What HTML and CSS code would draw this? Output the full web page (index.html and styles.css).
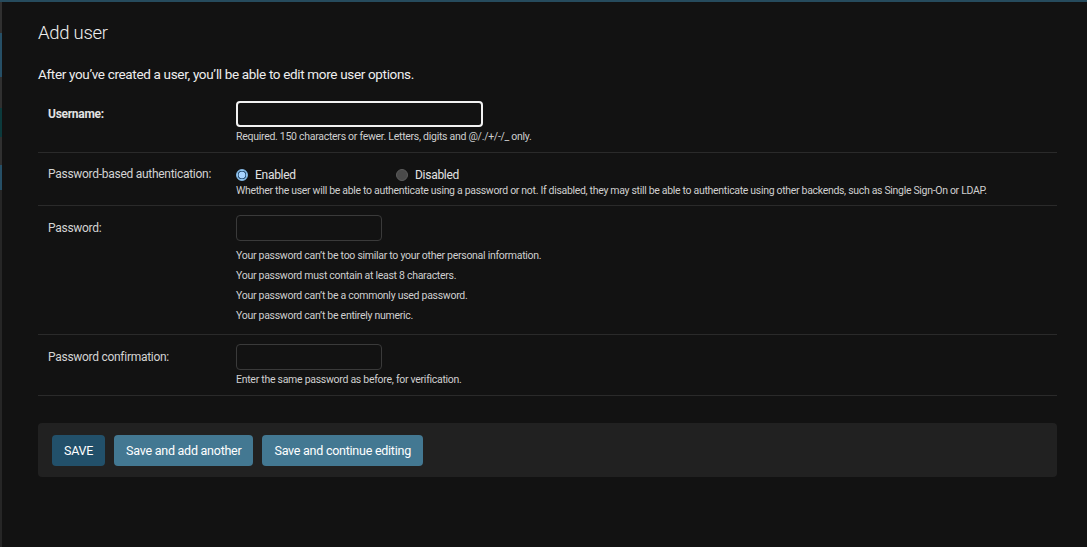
FILE: index.html
```html
<!DOCTYPE html>
<html lang="en">
<head>
<meta charset="utf-8">
<title>Add user</title>
<link rel="stylesheet" href="styles.css">
</head>
<body>
<div class="topbar"></div>
<div class="main">
  <div class="nav-strip">
    <span class="seg seg-grey seg-1"></span>
    <span class="seg seg-teal seg-2"></span>
    <span class="seg seg-grey seg-3"></span>
    <span class="seg seg-dark seg-4"></span>
    <span class="seg seg-grey seg-5"></span>
    <span class="seg seg-teal seg-6"></span>
    <span class="seg seg-line seg-7"></span>
  </div>
  <div class="content">
    <h1>Add user</h1>
    <form class="user-form">
      <p class="intro">After you’ve created a user, you’ll be able to edit more user options.</p>
      <fieldset class="module">
        <div class="form-row">
          <label class="label required">Username:</label>
          <div class="field">
            <div class="input input-wide input-focus"></div>
            <div class="help">Required. 150 characters or fewer. Letters, digits and @/./+/-/_ only.</div>
          </div>
        </div>
        <div class="form-row form-row-radio">
          <label class="label">Password-based authentication:</label>
          <div class="field">
            <ul class="radios">
              <li class="radio-item"><span class="radio radio-on"></span>Enabled</li>
              <li class="radio-item"><span class="radio"></span>Disabled</li>
            </ul>
            <div class="help help-tight">Whether the user will be able to authenticate using a password or not. If disabled, they may still be able to authenticate using other backends, such as Single Sign-On or LDAP.</div>
          </div>
        </div>
        <div class="form-row">
          <label class="label">Password:</label>
          <div class="field">
            <div class="input"></div>
            <ul class="help-list">
              <li>Your password can’t be too similar to your other personal information.</li>
              <li>Your password must contain at least 8 characters.</li>
              <li>Your password can’t be a commonly used password.</li>
              <li>Your password can’t be entirely numeric.</li>
            </ul>
          </div>
        </div>
        <div class="form-row">
          <label class="label">Password confirmation:</label>
          <div class="field">
            <div class="input"></div>
            <div class="help">Enter the same password as before, for verification.</div>
          </div>
        </div>
      </fieldset>
      <div class="submit-row">
        <button type="button" class="btn btn-default">SAVE</button>
        <button type="button" class="btn">Save and add another</button>
        <button type="button" class="btn">Save and continue editing</button>
      </div>
    </form>
  </div>
</div>
</body>
</html>
```

FILE: styles.css
```css
* { box-sizing: border-box; }

html, body {
  margin: 0;
  background: #121212;
}

body {
  color: #eeeeee;
  font-family: Roboto, "Open Sans", "DejaVu Sans", sans-serif;
  font-size: 14px;
  letter-spacing: -0.02em;
}

.topbar {
  height: 2px;
  background: #264b5d;
}

.main {
  display: flex;
  min-height: 545px;
}

.nav-strip {
  width: 2px;
  display: flex;
  flex-direction: column;
}

.seg { display: block; }
.seg-grey { background: #303030; }
.seg-teal { background: #264f66; }
.seg-dark { background: #0c3a3c; }
.seg-line { background: #262626; flex: 1; }
.seg-1 { height: 31px; }
.seg-2 { height: 44px; }
.seg-3 { height: 31px; }
.seg-4 { height: 29px; }
.seg-5 { height: 28px; }
.seg-6 { height: 25px; }

.content {
  flex: 1;
  padding: 0 30px 0 36px;
}

h1 {
  margin: 0;
  padding-top: 19px;
  font-size: 18.5px;
  font-weight: 300;
  line-height: 24px;
  color: #eeeeee;
}

.intro {
  margin: 19px 0 8px;
  font-size: 13.5px;
  letter-spacing: -0.025em;
  line-height: 20px;
  color: #eeeeee;
}

.module {
  margin: 0;
  padding: 0;
  border: 0;
}

.form-row {
  display: grid;
  grid-template-columns: 188px 1fr;
  padding: 9px 10px 8px;
  border-bottom: 1px solid #2a2a2a;
}

.label {
  font-size: 12px;
  line-height: 26px;
  color: #d4d4d4;
  white-space: nowrap;
}

.label.required {
  font-weight: 700;
  color: #e2e2e2;
}

.input {
  width: 146px;
  height: 26px;
  border: 1px solid #3a3a3a;
  border-radius: 4px;
}

.input-wide {
  width: 247px;
}

.input-focus {
  border: 2px solid #f2f2f2;
}

.help {
  margin-top: 3px;
  font-size: 10.5px;
  line-height: 14px;
  color: #cfcfcf;
}

.help-list {
  list-style: none;
  margin: 5px 0 0;
  padding: 0;
  font-size: 10.5px;
  line-height: 20px;
  color: #cfcfcf;
}

.form-row-radio {
  padding-bottom: 7px;
}

.form-row-radio .label {
  line-height: 24px;
}

.radios {
  list-style: none;
  margin: 0;
  padding: 0;
  display: flex;
  height: 25px;
  align-items: center;
}

.radio-item {
  width: 160px;
  display: flex;
  align-items: center;
  font-size: 12px;
  color: #e2e2e2;
}

.radio {
  width: 12px;
  height: 12px;
  border-radius: 50%;
  margin-right: 7px;
  background: #4a4a4a;
  border: 1px solid #5c5c5c;
}

.radio-on {
  border: 1px solid #86b9e4;
  background: radial-gradient(circle, #a9d5ff 0 3.3px, #2c5378 3.6px 4.2px, #8ec3ef 4.5px);
}

.help-tight {
  margin-top: -3px;
  letter-spacing: -0.03em;
}

.submit-row {
  margin-top: 27px;
  padding: 12px 14px 11px;
  background: #212121;
  border-radius: 4px;
  display: flex;
  gap: 9px;
}

.btn {
  height: 31px;
  padding: 0 12px;
  border: 0;
  border-radius: 4px;
  background: #437892;
  color: #ffffff;
  font-family: inherit;
  font-size: 12.5px;
  letter-spacing: -0.02em;
}

.btn-default {
  background: #22506a;
}
```
